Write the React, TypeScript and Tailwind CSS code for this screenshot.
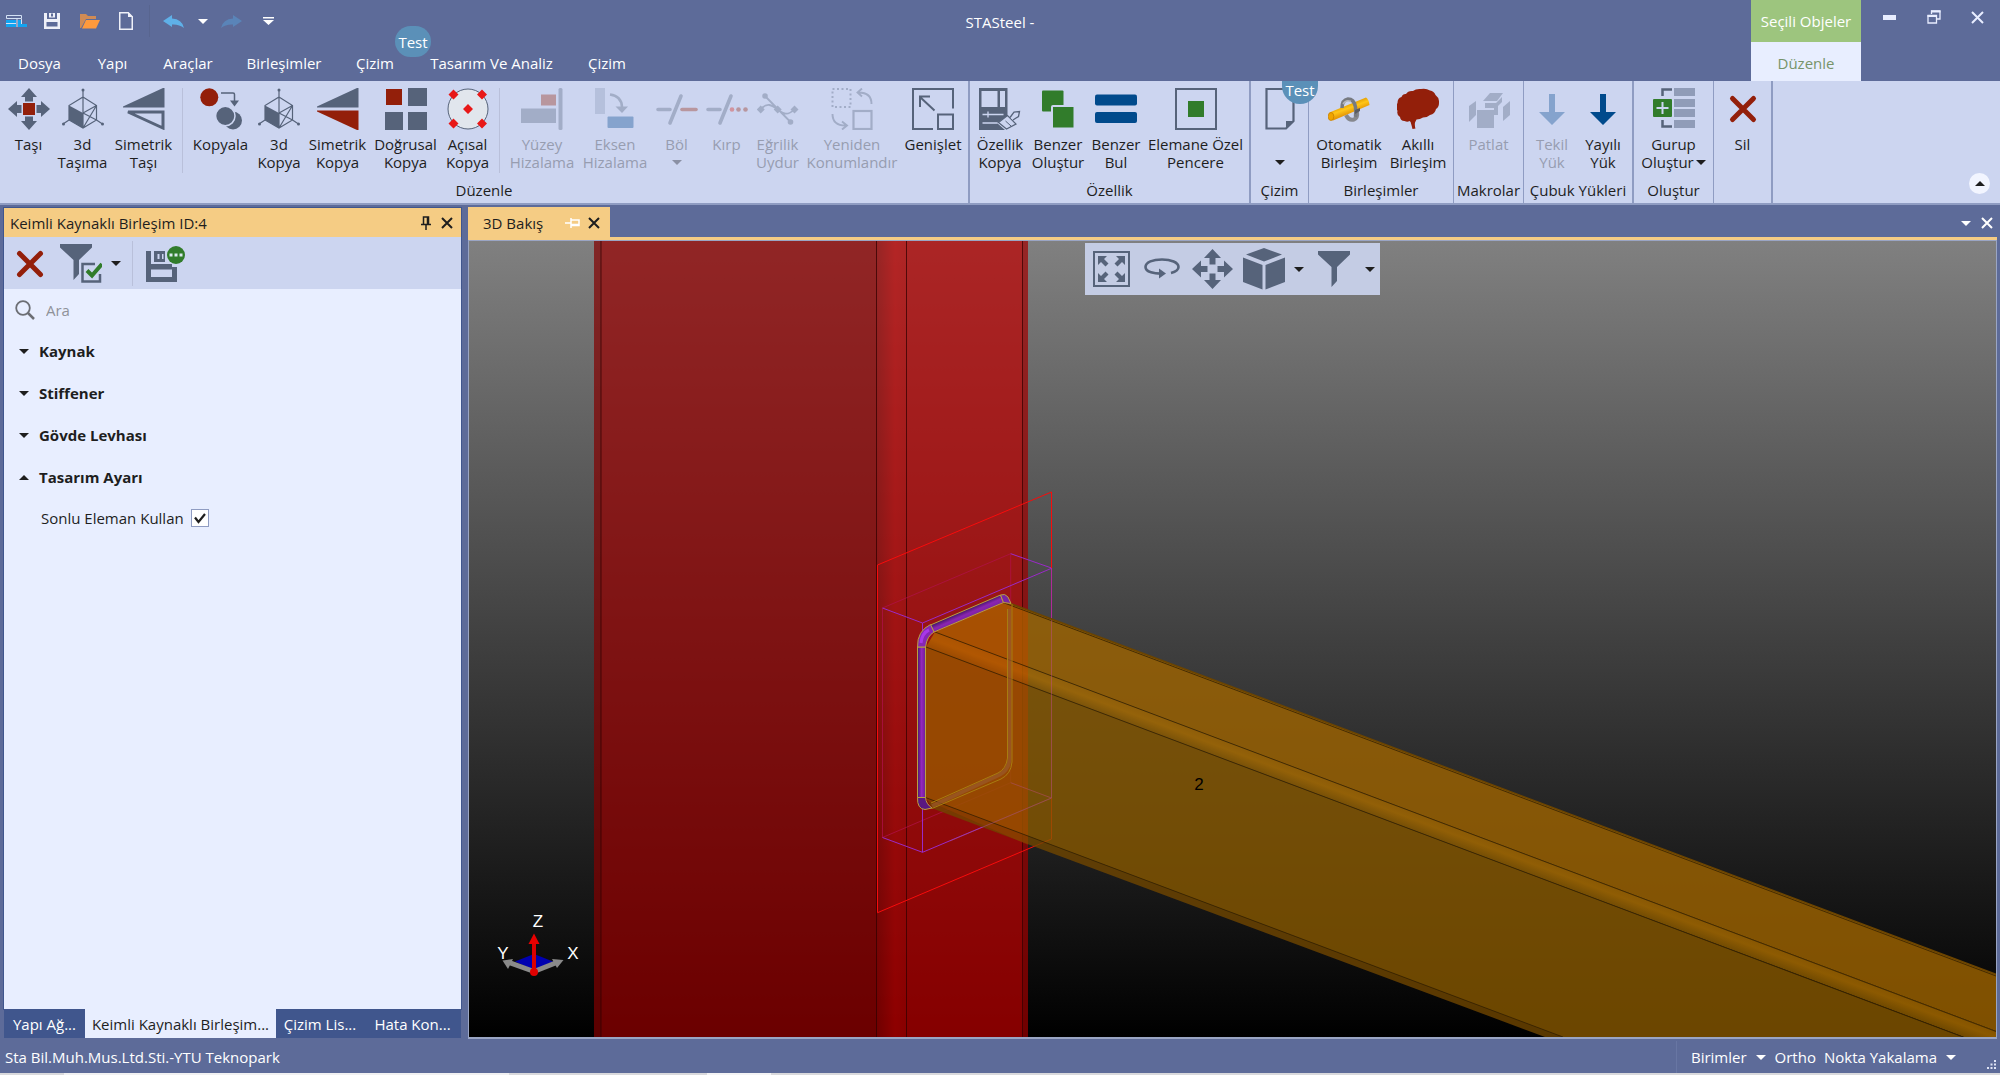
import React from "react";

const SLATE = "#56637a";
const RED = "#931f0a";
const GREEN = "#317c2b";
const BLUE = "#004a8c";
const MUTED = "#a2adc7";
const PALE = "#ccd5f0";

type Box = { children: React.ReactNode; w?: number; h?: number };

function Svg({ children, w = 42, h = 42 }: Box) {
  return (
    <svg width={w} height={h} viewBox={`0 0 ${w} ${h}`} fill="none" aria-hidden="true" className="block shrink-0">
      {children}
    </svg>
  );
}

function Caret({ color = "#1e1e1e", up = false }: { color?: string; up?: boolean }) {
  return (
    <Svg w={10} h={5}>
      <path d={up ? "M0 5h10L5 0z" : "M0 0h10L5 5z"} fill={color} />
    </Svg>
  );
}

function Cross({ color, size = 12, width = 2 }: { color: string; size?: number; width?: number }) {
  const e = size - 1;
  return (
    <Svg w={size} h={size}>
      <path d={`M1 1L${e} ${e}M${e} 1L1 ${e}`} stroke={color} strokeWidth={width} />
    </Svg>
  );
}

function RedCross({ size = 42 }: { size?: number }) {
  const o = (size - 26) / 2;
  return (
    <Svg w={size} h={size}>
      <path
        d={`M${o + 2.5} ${o + 2.5}L${o + 23.5} ${o + 23.5}M${o + 23.5} ${o + 2.5}L${o + 2.5} ${o + 23.5}`}
        stroke={RED}
        strokeWidth="5"
        strokeLinecap="round"
      />
    </Svg>
  );
}

/* ---------- ribbon icons ---------- */

const MoveIcon = () => (
  <Svg>
    <g fill={SLATE}>
      <path d="M21 0l8 9h-4v4.500h-8V9h-4z" />
      <path d="M21 42l8-9h-4v-4.500h-8V33h-4z" />
      <path d="M0 21l9-8v4h4.500v8H9v4z" />
      <path d="M42 21l-9-8v4h-4.500v8H33v4z" />
    </g>
    <rect x="15" y="15" width="12" height="12" fill={RED} />
  </Svg>
);

const Cube3dIcon = () => (
  <Svg>
    <path d="M21 2v23M21 9l13.500 8.500V32L21 40 7 32V17.500zM21 25l13.500-7.500M21 25l13.500 7M21 40l13.500-22.500M7 32l-6 4M34.500 32l6 4M21 25v15" stroke={SLATE} strokeWidth="1.200" />
    <path d="M7 17.500L21 25v15L7 32z" fill={SLATE} />
    <g fill={SLATE}>
      <circle cx="21" cy="2" r="1.500" />
      <circle cx="1.500" cy="36" r="1.500" />
      <circle cx="40.500" cy="36" r="1.500" />
    </g>
  </Svg>
);

const MirrorIcon = ({ copy = false }: { copy?: boolean }) => (
  <Svg>
    <path d="M0 19.500V18.500L40 0h1.500v19.500z" fill={SLATE} />
    {copy ? (
      <path d="M0 22.500h41.500V42H40L0 23.500z" fill={RED} />
    ) : (
      <path d="M5 24h35v16z" stroke={SLATE} strokeWidth="3" />
    )}
  </Svg>
);

const CopyIcon = () => (
  <Svg>
    <circle cx="9.300" cy="9.300" r="9" fill={RED} />
    <path d="M21 5h12q1.500 0 1.500 1.500V13" stroke={SLATE} strokeWidth="1.500" />
    <path d="M30 12.500h9L34.500 18.500z" fill={SLATE} />
    <circle cx="33" cy="32.500" r="9" fill={SLATE} />
    <circle cx="25.300" cy="28" r="9.700" fill={SLATE} stroke={PALE} strokeWidth="1.500" />
  </Svg>
);

const LinearIcon = () => (
  <Svg>
    <rect x="1" y="1" width="16" height="16" fill={RED} />
    <g fill={SLATE}>
      <rect x="23" y="0" width="19" height="18" />
      <rect x="0" y="24" width="18" height="18" />
      <rect x="23" y="24" width="19" height="18" />
    </g>
  </Svg>
);

const AngularIcon = () => (
  <Svg>
    <circle cx="21" cy="21" r="20" fill="#e1e6ed" stroke={SLATE} />
    <path
      fill="#e81818"
      d="M6.500 1.500l5 5-5 5-5-5zM35 1.500l5 5-5 5-5-5zM21 16l5 5-5 5-5-5zM6.500 30.500l5 5-5 5-5-5zM35 30.500l5 5-5 5-5-5z"
    />
  </Svg>
);

const SurfaceIcon = () => (
  <Svg>
    <rect x="20" y="6.500" width="15" height="11" fill="#b8969e" />
    <rect x="0" y="20.500" width="35" height="14.500" fill={MUTED} />
    <rect x="37.500" y="0" width="4" height="42" rx="1.500" fill={MUTED} />
  </Svg>
);

const AxisIcon = () => (
  <Svg>
    <rect x="1" y="0" width="10" height="26" fill="#b5c0dc" />
    <path d="M16 6.500q11.500 1.500 12 12.500" stroke={MUTED} strokeWidth="2.600" />
    <path d="M21.500 18.500H34L28 25z" fill={MUTED} />
    <rect x="13.500" y="28.500" width="26" height="11.500" rx="1" fill="#85a3cd" />
  </Svg>
);

const SplitIcon = () => (
  <Svg>
    <g strokeWidth="3.600" strokeLinecap="round">
      <path d="M2 21.500h12M25 8L14 35" stroke={MUTED} />
      <path d="M26 21.500h14" stroke="#b8969e" />
    </g>
  </Svg>
);

const TrimIcon = () => (
  <Svg>
    <path d="M2 21.500h12M25 8L14 35" stroke={MUTED} strokeWidth="3.600" strokeLinecap="round" />
    <circle cx="26" cy="21.500" r="2.300" fill="#d1949f" />
    <circle cx="32.500" cy="21.500" r="2.300" fill="#b8969e" />
    <circle cx="39.500" cy="21.500" r="2.300" fill="#b8969e" />
  </Svg>
);

const CurveIcon = () => (
  <Svg>
    <path d="M8 8l25.500 26M3.500 21.500C10 14 15 17 20.500 21.500S31 28 37 21.500" stroke={MUTED} strokeWidth="1.800" />
    <g fill={MUTED}>
      <circle cx="8" cy="8" r="2.800" />
      <circle cx="33.500" cy="34" r="2.800" />
      <path d="M3.700 17.500l4 4-4 4-4-4zM20.700 17.500l4 4-4 4-4-4zM37.500 17.500l4 4-4 4-4-4z" />
    </g>
  </Svg>
);

const RelocateIcon = () => (
  <Svg>
    <rect x="1.500" y="1" width="18" height="18" stroke={MUTED} strokeWidth="2" strokeDasharray="2 2.500" />
    <rect x="22.500" y="23" width="18" height="18" stroke={MUTED} strokeWidth="2.200" />
    <path d="M40.500 16q0-11.500-13-11.500M31 .5L26.500 4.500 31 8.500M1.500 26q0 11.500 13 11.500M11 33.500l5 4-5 4" stroke={MUTED} strokeWidth="1.900" />
  </Svg>
);

const ExpandIcon = () => (
  <Svg>
    <path d="M41 20.500V1H1v40h20" stroke={SLATE} strokeWidth="2" />
    <rect x="26" y="26.500" width="15" height="14.500" stroke={SLATE} strokeWidth="2" />
    <path d="M22.500 22.500L8 9M18 8.500H8V19" stroke={SLATE} strokeWidth="2" />
  </Svg>
);

const PropCopyIcon = () => (
  <Svg>
    <path fillRule="evenodd" d="M0 0h28.500v28L18 35l8 7H0zM2.500 3v16h16V3zM21 3v16h5V3z" fill={SLATE} />
    <path d="M3.500 26.500h21M9 23.500v6M3.500 35h15" stroke={PALE} strokeWidth="1.300" />
    <path d="M19.500 34.500l9-7 8.500 8.500-9.500 5z" fill={PALE} stroke={SLATE} strokeWidth="1.200" />
    <path d="M26.500 33l5.500 5" stroke={SLATE} />
    <path d="M31 29.500l4-5.500 5.500-.5-1 5-5.500 3.500" stroke={SLATE} strokeWidth="1.300" fill={PALE} />
  </Svg>
);

const SimilarCreateIcon = () => (
  <Svg>
    <rect x="5" y="2.500" width="21.500" height="21" rx="1" fill={GREEN} />
    <rect x="15" y="18" width="22.500" height="22.500" rx="1" fill={GREEN} stroke={PALE} strokeWidth="2" />
  </Svg>
);

const EqualsIcon = () => (
  <Svg>
    <rect y="6.500" width="42" height="11" rx="2" fill={BLUE} />
    <rect y="24" width="42" height="11" rx="2" fill={BLUE} />
  </Svg>
);

const WindowIcon = () => (
  <Svg>
    <rect x="1" y="1" width="40" height="40" stroke={SLATE} strokeWidth="2" />
    <rect x="13" y="13" width="16" height="16" fill={GREEN} />
  </Svg>
);

const SheetIcon = () => (
  <Svg>
    <path d="M7.500 1h27v32L27 40.500H7.500z" stroke={SLATE} strokeWidth="2.200" />
    <path d="M27 41v-8h8z" fill={SLATE} />
  </Svg>
);

const AutoJointIcon = () => (
  <Svg>
    <defs>
      <linearGradient id="pipe" x1="18" y1="16" x2="22" y2="27" gradientUnits="userSpaceOnUse">
        <stop offset="0" stopColor="#e09a00" />
        <stop offset=".4" stopColor="#ffc61a" />
        <stop offset="1" stopColor="#e08c00" />
      </linearGradient>
    </defs>
    <path d="M18 27q3 6 8 4.500 4-2 3-8" stroke="#86888e" strokeWidth="4" />
    <path d="M1.500 24.500L38 9.500q3 2 3.500 7.500L5 32.500q-5-1.500-3.500-8z" fill="url(#pipe)" />
    <ellipse cx="3" cy="28.500" rx="2.800" ry="4" fill="#f0a400" stroke="#c88000" strokeWidth=".8" />
    <path d="M14 20q0-8 6-9 6 0 7.500 8 .5 5 0 10" stroke="#777a80" strokeWidth="3.500" />
    <path d="M15 16q3-5 8-2.500" stroke="#b4b6ba" strokeWidth="1.500" />
    <path d="M27 22l5-2v3l-5 3z" fill="#5a5c62" />
  </Svg>
);

const BrainIcon = () => (
  <Svg>
    <path
      fill={RED}
      d="M9 6q2-3.500 7-3 3-2.500 8-2 5-1 9 1.500 4 .5 5.500 4.500 4 3 3.500 8 0 4-3 6-1 5-6 6-3 2.500-7 2.500-3 2-6.500 2l-1.500 3q-.5 3 .5 6l-3 .5q-1-4-1.500-5.500 0-2-1.500-2.500-2 1.500-5 0-4 0-4.500-4-3.500-2-2.500-6-2-4 0-8 0-5 4-6 1-3 4-3z"
    />
  </Svg>
);

const ExplodeIcon = () => (
  <Svg>
    <g fill={MUTED}>
      <path d="M22 5h13l-6 8H15z" />
      <path d="M1 18l7-5v14l-7 7z" />
      <path d="M9 22h17v18H9z" />
      <path d="M17 15h11l6-6v5l-4 4v9h-4v-7h-9z" />
      <path d="M35 19l7-6v14l-7 6z" />
    </g>
  </Svg>
);

const DownIcon = ({ color }: { color: string }) => (
  <Svg>
    <path d="M18 6h6v18h10L21 37 8 24h10z" fill={color} />
  </Svg>
);

const GroupIcon = () => (
  <Svg>
    <g fill="#909cb8">
      <rect x="21" y="0" width="21" height="8" />
      <rect x="21" y="11" width="21" height="8" />
      <rect x="21" y="21" width="21" height="8" />
      <rect x="21" y="32" width="21" height="8" />
    </g>
    <path d="M19 1.500H9.500V8M19 38.500H9.500V32" stroke={SLATE} strokeWidth="2.500" />
    <rect y="11" width="19" height="18" rx="1" fill={GREEN} />
    <path d="M9.500 14v12M3.500 20h12" stroke={PALE} strokeWidth="2" />
  </Svg>
);

/* ---------- ribbon ---------- */

type Tool = { icon: React.ReactNode; lines: string[]; w: string; off?: boolean; drop?: "below" | "inline"; name?: string };

function ToolButton({ icon, lines, w, off, drop, name }: Tool) {
  return (
    <button
      type="button"
      disabled={off}
      aria-label={name}
      className={`flex shrink-0 flex-col items-center whitespace-nowrap leading-[18px] ${w} ${off ? "text-[#979db0]" : "text-[#1e1e1e]"}`}
    >
      {icon}
      <span className="mt-[5px] flex flex-col items-center">
        {lines.map((line, i) => (
          <span key={i} className="flex min-h-[18px] items-center gap-0.5">
            {line}
            {drop === "inline" && i === lines.length - 1 && <Caret />}
          </span>
        ))}
        {drop === "below" && (
          <span className="flex h-[18px] items-center">
            <Caret color={off ? "#8a90a4" : "#1e1e1e"} />
          </span>
        )}
      </span>
    </button>
  );
}

function RibbonGroup({ label, width, edge, children }: { label: string; width: string; edge: string; children: React.ReactNode }) {
  return (
    <section className={`flex shrink-0 flex-col border-[#8f9cc2] ${edge} ${width}`} aria-label={label || "Sil"}>
      <div className="flex justify-center pt-[7px]">{children}</div>
      <div className="mt-auto flex h-[26px] items-center justify-center whitespace-nowrap text-[#1e1e1e]">{label}</div>
    </section>
  );
}

const Divider = () => <div className="mx-[5px] h-[85px] w-px shrink-0 bg-[#b9c0da]" />;

function TestBadge({ shape }: { shape: string }) {
  return <span className={`absolute z-10 flex w-9 justify-center bg-[#5b90b8] leading-[18px] text-white ${shape}`}>Test</span>;
}

function Ribbon() {
  return (
    <div className="flex h-[124px] shrink-0 border-b-2 border-[#8f9cc2] bg-[#ccd5f0]">
      <RibbonGroup label="Düzenle" width="w-[970px]" edge="border-r-2">
        <ToolButton icon={<MoveIcon />} lines={["Taşı"]} w="w-[53px]" />
        <ToolButton icon={<Cube3dIcon />} lines={["3d", "Taşıma"]} w="w-[55px]" />
        <ToolButton icon={<MirrorIcon />} lines={["Simetrik", "Taşı"]} w="w-[67px]" />
        <Divider />
        <ToolButton icon={<CopyIcon />} lines={["Kopyala"]} w="w-[65px]" />
        <ToolButton icon={<Cube3dIcon />} lines={["3d", "Kopya"]} w="w-[52px]" />
        <ToolButton icon={<MirrorIcon copy />} lines={["Simetrik", "Kopya"]} w="w-[65px]" />
        <ToolButton icon={<LinearIcon />} lines={["Doğrusal", "Kopya"]} w="w-[71px]" />
        <ToolButton icon={<AngularIcon />} lines={["Açısal", "Kopya"]} w="w-[53px]" />
        <Divider />
        <ToolButton off icon={<SurfaceIcon />} lines={["Yüzey", "Hizalama"]} w="w-[74px]" />
        <ToolButton off icon={<AxisIcon />} lines={["Eksen", "Hizalama"]} w="w-[72px]" />
        <ToolButton off icon={<SplitIcon />} lines={["Böl"]} w="w-[51px]" drop="below" />
        <ToolButton off icon={<TrimIcon />} lines={["Kırp"]} w="w-[49px]" />
        <ToolButton off icon={<CurveIcon />} lines={["Eğrilik", "Uydur"]} w="w-[53px]" />
        <ToolButton off icon={<RelocateIcon />} lines={["Yeniden", "Konumlandır"]} w="w-24" />
        <ToolButton icon={<ExpandIcon />} lines={["Genişlet"]} w="w-[66px]" />
      </RibbonGroup>
      <RibbonGroup label="Özellik" width="w-[281px]" edge="border-r-2">
        <ToolButton icon={<PropCopyIcon />} lines={["Özellik", "Kopya"]} w="w-[56px]" />
        <ToolButton icon={<SimilarCreateIcon />} lines={["Benzer", "Oluştur"]} w="w-[60px]" />
        <ToolButton icon={<EqualsIcon />} lines={["Benzer", "Bul"]} w="w-[56px]" />
        <ToolButton icon={<WindowIcon />} lines={["Elemane Özel", "Pencere"]} w="w-[103px]" />
      </RibbonGroup>
      <div className="relative flex">
        <RibbonGroup label="Çizim" width="w-[58px]" edge="border-r">
          <ToolButton icon={<SheetIcon />} lines={[""]} w="w-14" drop="below" name="Çizim" />
        </RibbonGroup>
        <TestBadge shape="left-[31px] top-0 h-[23px] rounded-b-[18px]" />
      </div>
      <RibbonGroup label="Birleşimler" width="w-[145px]" edge="border-r">
        <ToolButton icon={<AutoJointIcon />} lines={["Otomatik", "Birleşim"]} w="w-[74px]" />
        <ToolButton icon={<BrainIcon />} lines={["Akıllı", "Birleşim"]} w="w-[64px]" />
      </RibbonGroup>
      <RibbonGroup label="Makrolar" width="w-[70px]" edge="border-r">
        <ToolButton off icon={<ExplodeIcon />} lines={["Patlat"]} w="w-[66px]" />
      </RibbonGroup>
      <RibbonGroup label="Çubuk Yükleri" width="w-[110px]" edge="border-r-2">
        <ToolButton off icon={<DownIcon color="#85a3cd" />} lines={["Tekil", "Yük"]} w="w-[50px]" />
        <ToolButton icon={<DownIcon color={BLUE} />} lines={["Yayılı", "Yük"]} w="w-[52px]" />
      </RibbonGroup>
      <RibbonGroup label="Oluştur" width="w-20" edge="border-r">
        <ToolButton icon={<GroupIcon />} lines={["Gurup", "Oluştur"]} w="w-[76px]" drop="inline" />
      </RibbonGroup>
      <RibbonGroup label="" width="w-[59px]" edge="border-r-2">
        <ToolButton icon={<RedCross />} lines={["Sil"]} w="w-[57px]" />
      </RibbonGroup>
      <button
        type="button"
        aria-label="Şeridi daralt"
        className="mr-[10px] mb-[9px] ml-auto flex size-[21px] shrink-0 items-center justify-center self-end rounded-full bg-[#f2f5ff]"
      >
        <Caret up />
      </button>
    </div>
  );
}

/* ---------- title bar ---------- */

function QuickAccess() {
  return (
    <div className="flex items-center pl-1.5">
      <button type="button" aria-label="STASteel">
        <Svg w={22} h={12}>
          <path d="M.5.5h15v3H.5z" stroke="#d4e2f5" />
          <path d="M0 5h10v3H0zM0 9h10v3H0zM12 5h3v4h6v3h-9z" fill="#12a4f0" />
          <path d="M0 8.500h10M11 4v8M15.500 4v5" stroke="#d4e2f5" />
        </Svg>
      </button>
      <button type="button" aria-label="Kaydet" className="ml-4">
        <Svg w={16} h={16}>
          <path fillRule="evenodd" d="M0 0h3v6h10V0h3v16H0zM2.500 9v4.500h11V9z" fill="#eef0f8" />
          <path d="M5 0h6v4.500H5z" fill="#eef0f8" />
          <path d="M7 .5h2v3H7z" fill="#5d6b99" />
        </Svg>
      </button>
      <button type="button" aria-label="Aç" className="ml-5">
        <Svg w={20} h={15}>
          <path d="M0 0h6l2 2h8v3H6L1 14H0z" fill="#d08b55" />
          <path d="M6 6h14l-4 8.500H2z" fill="#ff9a3c" />
        </Svg>
      </button>
      <button type="button" aria-label="Yeni" className="ml-[19px]">
        <Svg w={14} h={18}>
          <path d="M.75.75h8.500l4 4v12.500H.75z" stroke="#eef0f8" strokeWidth="1.500" />
          <path d="M9 0l5 5H9z" fill="#eef0f8" />
        </Svg>
      </button>
      <div className="ml-4 h-8 w-px bg-[#58658f]" />
      <button type="button" aria-label="Geri al" className="ml-[13px]">
        <Svg w={21} h={13}>
          <path d="M0 6l9-6v3.500q10 .5 12 9.500-5-4-12-3.500V12z" fill="#5fb0e8" />
        </Svg>
      </button>
      <button type="button" aria-label="Geri al listesi" className="ml-3.5">
        <Caret color="#fff" />
      </button>
      <button type="button" aria-label="Yinele" className="ml-[13px]" disabled>
        <Svg w={21} h={13}>
          <path d="M21 6l-9-6v3.500Q2 4 0 13q5-4 12-3.500V12z" fill="#5a84b8" />
        </Svg>
      </button>
      <button type="button" aria-label="Özelleştir" className="ml-[21px]">
        <Svg w={11} h={8}>
          <path d="M0 0h11v1.500H0zM0 3h11L5.500 8z" fill="#fff" />
        </Svg>
      </button>
    </div>
  );
}

const MENU = [
  ["Dosya", "w-[79px]"],
  ["Yapı", "w-[67px]"],
  ["Araçlar", "w-[84px]"],
  ["Birleşimler", "w-[108px]"],
  ["Çizim", "w-[74px]"],
  ["Tasarım Ve Analiz", "w-[159px]"],
  ["Çizim", "w-[72px]"],
];

function Header() {
  return (
    <header className="shrink-0 text-white">
      <div className="grid h-[42px] grid-cols-[1fr_auto_1fr]">
        <QuickAccess />
        <h1 className="self-center pt-px">STASteel -</h1>
        <div className="flex justify-end">
          <div className="flex w-[110px] items-center justify-center whitespace-nowrap bg-[#9dc57e]">Seçili Objeler</div>
          <div className="flex w-[139px] pt-[10px] pl-[22px]">
            <button type="button" aria-label="Simge durumuna küçült" className="flex h-3.5 items-center">
              <Svg w={13} h={5}>
                <path d="M0 0h13v5H0z" fill="#e8edff" />
              </Svg>
            </button>
            <button type="button" aria-label="Geri yükle" className="ml-[31px] h-3.5">
              <Svg w={14} h={14}>
                <path d="M4.500 4V1H13v8h-3M1 5.500h8.500v7.500H1z" stroke="#e8edff" strokeWidth="1.300" />
                <path d="M4 1.500h9.500M.5 6h9" stroke="#e8edff" strokeWidth="2" />
              </Svg>
            </button>
            <button type="button" aria-label="Kapat" className="ml-[30px] flex h-3.5 items-center">
              <Cross color="#e8edff" size={13} />
            </button>
          </div>
        </div>
      </div>
      <div className="flex h-[39px]">
        <nav className="flex">
          {MENU.map(([label, w], i) => (
            <div key={i} className={`relative flex ${w}`}>
              <button type="button" className="flex-1 whitespace-nowrap pt-0.5">
                {label}
              </button>
              {i === 5 && <TestBadge shape="-left-[17px] -top-4 h-[31px] items-center rounded-full" />}
            </div>
          ))}
        </nav>
        <button type="button" className="mr-[139px] ml-auto w-[110px] bg-[#e8eeff] pt-0.5 text-[#77946a]">
          Düzenle
        </button>
      </div>
    </header>
  );
}

/* ---------- left panel ---------- */

function Filter({ check = false }: { check?: boolean }) {
  return (
    <Svg w={check ? 42 : 32} h={check ? 39 : 36}>
      <path d="M0 0h32v3.500L19 16v14l-5.500 6V16L0 3.500z" fill={SLATE} />
      {check && (
        <>
          <path d="M20.500 17.500h22v22h-22z" fill={PALE} />
          <path d="M40 30v7.500H22.500V20H35" stroke={SLATE} strokeWidth="2.500" />
          <path d="M27 26.500l5 5L42 20" stroke={GREEN} strokeWidth="4" />
        </>
      )}
    </Svg>
  );
}

const DOCK_TABS = [
  ["Yapı Ağ...", "w-[81px]"],
  ["Keimli Kaynaklı Birleşim...", "w-[191px]"],
  ["Çizim Lis...", "w-[88px]"],
  ["Hata Kon...", "w-[97px]"],
];

function SidePanel() {
  return (
    <aside className="mt-0.5 ml-[3px] flex w-[459px] shrink-0 flex-col text-[#1e1e1e]">
      <div className="flex flex-1 flex-col border border-[#40568d] bg-[#e8eeff]">
        <div className="flex h-[29px] shrink-0 items-center bg-[#f5cc84] pt-px pl-1.5">
          <h2>Keimli Kaynaklı Birleşim ID:4</h2>
          <button type="button" aria-label="Sabitle" className="mr-2.5 ml-auto">
            <Svg w={10} h={14}>
              <path d="M2.500 8V1h5v7M6.500 1v7M0 8.500h10M5 9v5" stroke="#1e1e1e" strokeWidth="1.500" />
            </Svg>
          </button>
          <button type="button" aria-label="Paneli kapat" className="mr-2">
            <Cross color="#1e1e1e" />
          </button>
        </div>
        <div className="flex h-[52px] shrink-0 items-center bg-[#ccd5f0] pt-px pl-3">
          <button type="button" aria-label="Sil">
            <RedCross size={28} />
          </button>
          <button type="button" aria-label="Filtre" className="ml-4">
            <Filter check />
          </button>
          <button type="button" aria-label="Filtre seçenekleri" className="ml-[9px]">
            <Caret />
          </button>
          <div className="ml-[11px] h-[45px] w-px bg-[#b9c0da]" />
          <button type="button" aria-label="Farklı kaydet" className="ml-[13px]">
            <Svg w={39} h={36}>
              <path fillRule="evenodd" d="M0 5h5v13h21v3h5v15H0zM5 23.500v7.500h21v-7.500z" fill={SLATE} />
              <path d="M8 5h11v11H8z" fill={SLATE} />
              <path d="M11.500 8h6v5h-6z" fill={PALE} />
              <path d="M13.500 8h2.500v5h-2.500z" fill={SLATE} />
              <circle cx="30" cy="9" r="9" fill={GREEN} />
              <path d="M23.500 7.500h3v3h-3zM28.500 7.500h3v3h-3zM33.500 7.500h3v3h-3z" fill="#dce9f0" />
            </Svg>
          </button>
        </div>
        <label className="flex h-[41px] shrink-0 items-center pl-[11px]">
          <Svg w={20} h={20}>
            <circle cx="8" cy="8" r="6.800" stroke="#6c6e74" strokeWidth="1.800" />
            <path d="M13 13l6 6" stroke="#6c6e74" strokeWidth="2.500" />
          </Svg>
          <input
            type="text"
            placeholder="Ara"
            aria-label="Ara"
            className="ml-[11px] flex-1 bg-transparent outline-none placeholder:text-[#8f9299]"
          />
        </label>
        {["Kaynak", "Stiffener", "Gövde Levhası", "Tasarım Ayarı"].map((title, i) => (
          <button key={title} type="button" aria-expanded={i === 3} className="flex h-[42px] shrink-0 items-center gap-2.5 pl-[15px] font-bold">
            <Caret up={i === 3} />
            {title}
          </button>
        ))}
        <label className="flex h-10 items-center gap-[7px] pl-[37px]">
          Sonlu Eleman Kullan
          <span className="relative flex size-[18px]">
            <input type="checkbox" defaultChecked className="peer size-[18px] appearance-none border border-[#8f9cc2] bg-white" />
            <span className="pointer-events-none absolute top-1 left-[3px] hidden peer-checked:block">
              <Svg w={12} h={11}>
                <path d="M1 4.500l3.500 4.500L11 1" stroke="#1e1e1e" strokeWidth="2.200" />
              </Svg>
            </span>
          </span>
        </label>
      </div>
      <div role="tablist" className="mr-px mb-px ml-px flex h-7 shrink-0 bg-[#40568d] text-white">
        {DOCK_TABS.map(([label, w], i) => (
          <button
            key={label}
            type="button"
            role="tab"
            aria-selected={i === 1}
            className={`whitespace-nowrap text-center ${w} ${i === 1 ? "-mt-px bg-[#e8eeff] text-[#1e1e1e]" : ""}`}
          >
            {label}
          </button>
        ))}
      </div>
    </aside>
  );
}

/* ---------- 3D view ---------- */

function Scene() {
  return (
    <svg
      viewBox="469 241 1527 796"
      preserveAspectRatio="xMinYMin slice"
      className="absolute inset-0 h-full w-full"
      role="img"
      aria-label="3D Bakış"
      fontFamily="'Liberation Sans', Arial, sans-serif"
    >
      <defs>
        <linearGradient id="sky" x1="0" y1="0" x2="0" y2="1">
          <stop offset="0" stopColor="#808080" />
          <stop offset="1" stopColor="#000" />
        </linearGradient>
        <linearGradient id="fillet">
          <stop offset="0" stopColor="rgb(160,0,0)" />
          <stop offset=".6" stopColor="rgb(202,0,0)" />
          <stop offset="1" stopColor="rgb(192,0,0)" />
        </linearGradient>
        <linearGradient id="bevel" x1="1400" y1="807" x2="1394" y2="823" gradientUnits="userSpaceOnUse">
          <stop offset="0" stopColor="rgb(166,105,0)" />
          <stop offset=".4" stopColor="rgb(174,111,0)" />
          <stop offset="1" stopColor="rgb(140,91,0)" />
        </linearGradient>
        <linearGradient id="weldV" x1="917" x2="926" y1="0" y2="0" gradientUnits="userSpaceOnUse">
          <stop offset="0" stopColor="#3d1560" />
          <stop offset=".5" stopColor="#9428bc" />
          <stop offset="1" stopColor="#6a1c90" />
        </linearGradient>
        <linearGradient id="weldH" x1="964" y1="610" x2="968" y2="619" gradientUnits="userSpaceOnUse">
          <stop offset="0" stopColor="#3d1560" />
          <stop offset=".5" stopColor="#8a25b0" />
          <stop offset="1" stopColor="#7a22a0" />
        </linearGradient>
      </defs>
      <rect x="469" y="241" width="1527" height="796" fill="url(#sky)" />

      <g opacity=".7">
        <rect x="594" y="241" width="7" height="796" fill="rgb(131,0,0)" />
        <rect x="601" y="241" width="276" height="796" fill="rgb(153,0,0)" />
        <rect x="877" y="241" width="30" height="796" fill="url(#fillet)" />
        <rect x="907" y="241" width="116" height="796" fill="rgb(190,0,0)" />
        <rect x="1023" y="241" width="5" height="796" fill="rgb(160,0,0)" />
      </g>
      <path d="M601 241v796M876.500 241v796M906.500 241v796M1022.500 241v796" stroke="#300" strokeOpacity=".75" />

      <g fill="none" strokeWidth="1">
        <path d="M882.500 608L1010.700 553.700V782.700M882.500 608V837.500L1010.700 782.700L1051.500 798" stroke="#b0104a" strokeOpacity=".75" />
        <path d="M1010.700 553.700L1051.500 568M882.500 608L922.500 623L1051.500 568.300M882.500 837.500L922.500 852.300L1051.500 798M922.500 623V852.300" stroke="#9a2ac8" />
        <path d="M877.500 565L1051.500 492V839L877.500 912.700z" stroke="#f80c0c" />
        <path d="M1051.500 568V798" stroke="#b02a98" />
      </g>

      <g opacity=".8">
        <path d="M935 632L1003 603L1011 603.700L1996 974.300V1031z" fill="rgb(159,100,0)" />
        <path d="M926 647L935 632L1996 1031V1049z" fill="url(#bevel)" />
        <path d="M926 647L1996 1049.500L1996 1200L926 797.700z" fill="rgb(135,88,0)" />
        <path d="M926 797.700L1563 1037H1545L932 808.300z" fill="rgb(112,70,0)" />
      </g>
      <path d="M926 647L935 632L1003 602L1028 610V845L926 800z" fill="#d04800" fillOpacity=".2" />
      <g stroke="#3a2500" strokeWidth="1" fill="none" strokeOpacity=".85">
        <path d="M1003 602.500L1996 976M935 632L1996 1031.500M926 647L1963 1037M926 797.700L1563 1037" />
      </g>
      <path d="M1011 603.700L1996 974.300" stroke="#6b4400" strokeWidth="1.500" />
      <path d="M1051.500 620V798L1010.700 782.700M1051.500 798L950 841" stroke="#a8507a" strokeOpacity=".45" fill="none" />

      <path d="M1009.500 609V758Q1009 770 999 775L932 806" fill="none" stroke="#98582a" strokeWidth="4" strokeOpacity=".75" />
      <path d="M1007.500 609V758Q1006 769 998 773L931 803M1012 604V762Q1011 774 1001 779L932 808.500" fill="none" stroke="#a87c10" strokeWidth="1" />

      <g stroke="#b8a040" strokeWidth="1">
        <path d="M917.500 647H925.500V797.500H917.500z" fill="url(#weldV)" />
        <path d="M930.500 625L1000.500 595L1003.500 602.500L934 632z" fill="url(#weldH)" />
        <path d="M917.500 647Q917 631 930.500 624.500L934 632Q927 636 925.500 647z" fill="#8726b4" />
        <path d="M1000.500 595Q1005 593 1008 597L1011 603.500L1003.500 602.500z" fill="#7a24a4" />
        <path d="M917.500 797.500Q917 809 925 809.500L932 808Q926 804 925.500 797.500z" fill="#5a1880" />
      </g>
      <path d="M921 643Q922 633 929 630" stroke="#a838e8" strokeWidth="3" fill="none" />

      <text x="1199" y="790" fontSize="17" textAnchor="middle" fill="#000">2</text>

      <path d="M515 961.500L534 954L553 961.500L534 970z" fill="#0000b0" />
      <g fill="#8a8a8a">
        <path d="M534 971.500L508 962" stroke="#8a8a8a" strokeWidth="5" />
        <path d="M534 971.500L558 962" stroke="#8a8a8a" strokeWidth="5" />
        <path d="M502.500 960.500L513 959L508 969z" />
        <path d="M563.500 960L552 959L557 968z" />
      </g>
      <path d="M534 972V943" stroke="#dc0000" strokeWidth="4" />
      <path d="M534 933.500L539.500 944H528.500z" fill="#e80000" />
      <circle cx="534" cy="972" r="4" fill="#e00000" />
      <g fill="#fff" fontSize="17" textAnchor="middle">
        <text x="538" y="927">Z</text>
        <text x="503" y="959">Y</text>
        <text x="573" y="959">X</text>
      </g>
    </svg>
  );
}

function ViewToolbar() {
  return (
    <div className="absolute top-[2px] left-[616px] flex h-[52px] items-center bg-[#c4cce4] px-2">
      <button type="button" aria-label="Sığdır">
        <Svg w={37} h={36}>
          <rect x="1" y="1" width="35" height="34" stroke={SLATE} strokeWidth="2" />
          <path
            fill={SLATE}
            d="M5 5h9l-3 3 4.500 4.500-3 3L8 11l-3 3zM32 5v9l-3-3-4.500 4.500-3-3L26 8l-3-3zM5 31v-9l3 3 4.500-4.500 3 3L11 28l3 3zM32 31h-9l3-3-4.500-4.500 3-3L29 25l3-3z"
          />
        </Svg>
      </button>
      <button type="button" aria-label="Döndür" className="ml-3.5">
        <Svg w={36} h={22}>
          <path d="M20 15.500C10 16 1.500 14 1.500 9S9 1.500 18 1.500 34.500 4.500 34.500 9q0 4-7.500 6" stroke={SLATE} strokeWidth="2.600" />
          <path d="M15 10.500l7 5-7 5z" fill={SLATE} />
        </Svg>
      </button>
      <button type="button" aria-label="Kaydır" className="ml-3">
        <Svg w={41} h={40}>
          <path
            fill={SLATE}
            d="M20.500 0l8.500 9h-5.500v6.500h-6V9H12zM20.500 40l8.500-9h-5.500v-6.500h-6V31H12zM0 20l9-8.500V17h6.500v6H9v5.500zM41 20l-9-8.500V17h-6.500v6H32v5.500z"
          />
        </Svg>
      </button>
      <button type="button" aria-label="Görünüm" className="ml-2.5">
        <Svg w={42} h={42}>
          <path fill={SLATE} d="M21 0l18 6.500-18 7-18-7zM0 9.500l19.500 7.500v24.500L0 34zM42 9.500L22.500 17v24.500L42 34z" />
        </Svg>
      </button>
      <button type="button" aria-label="Görünüm seçenekleri" className="ml-[9px]">
        <Caret />
      </button>
      <button type="button" aria-label="Görünüm filtresi" className="ml-3.5">
        <Filter />
      </button>
      <button type="button" aria-label="Filtre seçenekleri" className="-mr-[3px] ml-[15px]">
        <Caret />
      </button>
    </div>
  );
}

function Workspace() {
  return (
    <main className="mt-0.5 mr-[3px] ml-1.5 flex min-w-0 flex-1 flex-col">
      <div className="flex h-[30px] shrink-0 items-center">
        <div className="flex h-full w-[142px] items-center bg-[#f5cc84] pt-0.5 pl-[15px] text-[#1e1e1e]">
          3D Bakış
          <button type="button" aria-label="Sekmeyi sabitle" className="mr-2 ml-auto">
            <Svg w={15} h={10}>
              <path d="M0 5h6M6 0v10M6 2h8v5.500H6M6 6.500h8" stroke="#fff" strokeWidth="1.500" />
            </Svg>
          </button>
          <button type="button" aria-label="Sekmeyi kapat" className="mr-2.5">
            <Cross color="#1e1e1e" />
          </button>
        </div>
        <button type="button" aria-label="Sekme listesi" className="ml-auto pt-0.5">
          <Caret color="#fff" />
        </button>
        <button type="button" aria-label="Görünümü kapat" className="mr-1 ml-2.5 pt-0.5">
          <Cross color="#fff" />
        </button>
      </div>
      <div className="h-[3px] shrink-0 bg-[#f5cc84]" />
      <div className="relative flex-1 overflow-hidden border border-b-2 border-[#9aa5c4]">
        <Scene />
        <ViewToolbar />
      </div>
    </main>
  );
}

function StatusBar() {
  return (
    <footer className="shrink-0">
      <div className="flex h-[34px] items-center pt-0.5 pl-[5px] text-white">
        <span>Sta Bil.Muh.Mus.Ltd.Sti.-YTU Teknopark</span>
        <div className="ml-auto h-full w-px bg-[#6876a3]" />
        <button type="button" className="ml-3.5 flex items-center gap-[9px]">
          Birimler <Caret color="#fff" />
        </button>
        <button type="button" className="ml-[9px]">Ortho</button>
        <button type="button" className="mr-[31px] ml-2 flex items-center gap-[9px]">
          Nokta Yakalama <Caret color="#fff" />
        </button>
        <div className="mr-1 mb-1 self-end">
          <Svg w={9} h={9}>
            <path d="M7 0h2v2H7zM7 3.500h2v2H7zM7 7h2v2H7zM3.500 3.500h2v2h-2zM3.500 7h2v2h-2zM0 7h2v2H0z" fill="#dfe4f5" />
          </Svg>
        </div>
      </div>
      <div className="flex h-0.5 bg-[#d9d9dc]">
        <div className="ml-16 w-[445px] bg-[#f1f1f2]" />
        <div className="ml-[198px] w-16 bg-[#f4f4f5]" />
      </div>
    </footer>
  );
}

export default function App() {
  return (
    <div className="flex min-h-screen flex-col bg-[#5d6b99] font-['Open_Sans','Noto_Sans',sans-serif] text-[15px] leading-5">
      <Header />
      <Ribbon />
      <div className="flex flex-1">
        <SidePanel />
        <Workspace />
      </div>
      <StatusBar />
    </div>
  );
}
